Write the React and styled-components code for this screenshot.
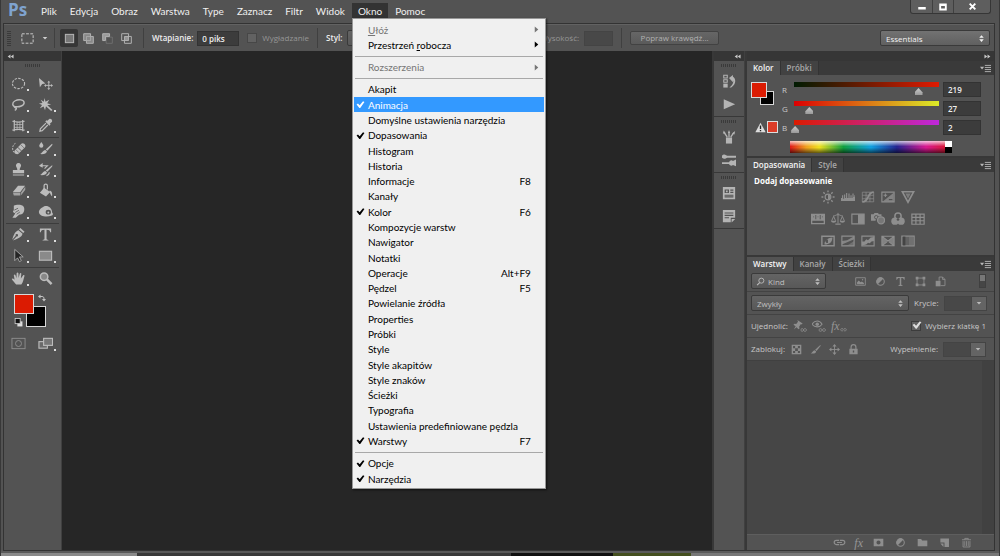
import React, { useState } from 'react';
import styled, { createGlobalStyle, ThemeProvider } from 'styled-components';

const theme = {
  colors: {
    panel: '#535353',
    panelDark: '#464646',
    bar: '#383838',
    canvas: '#262626',
    field: '#3c3c3c',
    text: '#eee',
    textMuted: '#c8c8c8',
    textDisabled: '#969696',
    highlight: '#3399ff',
  },
};

const GlobalStyle = createGlobalStyle`
  * {
    box-sizing: border-box;
  }

  html, body, #root {
    height: 100%;
  }

  body {
    margin: 0;
    overflow: hidden;
    background: #535353;
    font-family: 'Open Sans', 'Noto Sans', sans-serif;
    font-size: 8px;
    color: #e4e4e4;
  }

  button, input, select {
    margin: 0;
    padding: 0;
    font-family: inherit;
    font-size: inherit;
    color: inherit;
  }
`;

/* ---------- icons, all on a 16 x 16 grid ---------- */

const stroke = { fill: 'none', stroke: 'currentColor' };

const ICONS = {
  marquee: <rect x="2" y="3" width="12" height="10" {...stroke} strokeDasharray="3 1.5" />,
  ellipse: <ellipse cx="8" cy="8" rx="6.5" ry="5.5" {...stroke} strokeWidth="1.2" strokeDasharray="2.6 1.3" />,
  move: (
    <>
      <path d="M1 2l7 6-3.5.5L2 12z" />
      <path d="M11.500 6.500v7M8 10h7" {...stroke} />
      <path d="M11.500 5l1.600 2h-3.200zM11.500 15l1.600-2h-3.200zM6.500 10l2-1.600v3.200zM16 10l-2-1.600v3.200z" />
    </>
  ),
  lasso: <path d="M5 10.500C1 10 .8 6 4.500 4s9.500-1 9.500 2-5 5.200-9.500 4.200c-2-1-1 1.300.5 1.500s.500 2-1 2.600" {...stroke} strokeWidth="1.500" />,
  wand: <path d="M7 1l1 4 4-2-2.200 3.600L14 8l-4 .8 5.500 5L14 15 8.500 9.800 7.500 14 6 10l-4 2 2.300-3.500L1 7l3.800-.6L3 3l3.200 2z" />,
  grid: (
    <>
      <path d="M3.500 2v12M12.500 2v12M1.500 3.500c4 1 9 1 13 0M1.500 13c4-1 9-1 13 0" {...stroke} strokeWidth="1.300" />
      <path d="M6.500 4v9M9.500 4v9M3.500 7h9M3.500 10h9" {...stroke} strokeWidth=".8" />
    </>
  ),
  dropper: (
    <>
      <path d="M10 3l2-2c1.500-.8 3.600.8 3 3l-2.400 2.200.8.8-1.200 1.200L7.800 3.800 9 2.500z" />
      <path d="M8.500 5.500l-6 6L2 14l2.500-.5 6-6" {...stroke} strokeWidth="1.300" />
    </>
  ),
  bandage: (
    <>
      <path d="M6 13C1 14 0 4 5 2.500" {...stroke} strokeDasharray="2 1" />
      <path d="M4 10l7-7c2-2 6 1.500 3.700 4L8 13.700C5.500 15 2.500 12 4 10z" />
      <path d="M7 6.500l4 4" stroke="#535353" fill="none" />
      <path d="M10 3.500l4 4M5 9l3.500 3.500" stroke="#777" fill="none" />
    </>
  ),
  brush: (
    <>
      <path d="M15 1.500c.8.6.3 1.500-.3 2.300L9.500 10 7.500 8.500z" />
      <path d="M7 9.200l1.900 1.600c0 2.800-4.500 3.700-7.900 2.900 2.500-.7 2.800-4.300 6-4.500z" />
    </>
  ),
  dropBrush: (
    <>
      <path d="M3.500 1c1.500 2 2.200 2.800 2.200 4a2.200 2.200 0 01-4.400 0c0-1.200 1-2 2.200-4z" />
      <path d="M15 3c.8.6.3 1.300-.3 2L10 10.500 8.300 9zM7.800 9.500l1.700 1.500c0 2.500-4 3.500-7.500 2.900 2.400-.6 3-4.200 5.800-4.400z" />
    </>
  ),
  stamp: <path d="M8 1a2.700 2.700 0 012.400 4C9.500 6.500 9.300 7 9.300 8.500H14V12H2V8.500h4.700c0-1.500-.2-2-1.100-3.500A2.700 2.700 0 018 1zM2 13.200h12v1.300H2z" />,
  historyBrush: (
    <>
      <path d="M15 3.500c.6.5.3 1-.3 1.700L10 10.500 8.300 9zM7.800 9.500l1.700 1.500c0 2.500-4 3.500-7.500 2.900 2.400-.6 3-4.200 5.800-4.400z" />
      <path d="M3 4h7l-3 3M12 11c0 2-1 3-3 3.500" {...stroke} strokeWidth="1.200" />
      <path d="M1 4l4-3v5z" />
    </>
  ),
  eraser: (
    <>
      <path d="M7.500 3H15l-5 6.500H2z" />
      <path d="M2 10.200h8v3H3zM10.800 10L15.200 4v3.300l-4.400 5.700z" opacity=".75" />
    </>
  ),
  bucket: (
    <>
      <path d="M6.500 5L13 9.500 8.500 14.500 2 10.500z" />
      <path d="M6.500 10V3c0-2.500 3.500-2.500 3.500 0v4" {...stroke} strokeWidth="1.300" />
      <path d="M12.500 8c2.500.5 3 3 2.500 6-1.500-.5-1.500-3-3-4.500z" />
    </>
  ),
  smudge: (
    <>
      <path d="M3 1.800c3-1.500 9-1.300 10.500 1 1.500 2.500.5 7-2.500 8.200-1.500.5-2 .2-3 1l-3 2.700H1.500l3-4.700L2 8.500 3 6z" />
      <path d="M3.500 6.500l4-2M4.500 9l4-2.300M6 11l3.500-2.500" stroke="#666" fill="none" />
    </>
  ),
  sponge: (
    <>
      <path fillRule="evenodd" d="M5 3.500C9-.2 15.500 4 15 9c1.500 1 1 3.500-1 3.500C9 14.500.5 13 1 8c.3-2 2-3.500 4-4.500zM11 6.200a2.800 2.500 0 100 5 2.800 2.500 0 000-5z" />
      <circle cx="11" cy="9" r="1" />
    </>
  ),
  pen: (
    <path fillRule="evenodd" d="M10 1l4.500 4-1.500 1.500L8.500 2.500zM8 3.500L12.300 7.300c-1 3.500-4 5-10.300 7.200l4-4.500a1.300 1.300 0 10-1-.8L1.300 13.500C3 8 4.500 4.500 8 3.500z" />
  ),
  type: <path d="M2 1.500h12v4h-1c-.4-1.800-1-2.500-3.900-2.500v9.500c0 .8.500 1.100 2 1.300v.7H4.900v-.7c1.500-.2 2-.5 2-1.300V3C4 3 3.400 3.700 3 5.500H2z" />,
  arrow: <path d="M4 1.500v12l3-3 2 4 2-1-2-4h4z" fill="#252525" stroke="currentColor" strokeWidth=".8" />,
  rect: <rect x="1.500" y="3.500" width="13" height="9.500" fill="#8a8a8a" stroke="currentColor" strokeWidth="1.200" />,
  hand: (
    <path d="M5.500 14.500C4 12.500 2 10.500 .8 8.500c.4-1 1.700-.7 3 .8L3 4.500c.2-1.200 1.500-1.200 1.800 0l1 3.200L6 2.500c.3-1.200 1.600-1.200 1.900 0l.2 5 1.200-4.700c.4-1.200 1.700-.9 1.700.2L10.500 8l2.300-3.300c.9-.9 1.900-.2 1.500.9-1 3-1.300 6.500-3.300 8.900z" />
  ),
  zoom: (
    <>
      <circle cx="6.500" cy="6" r="4" fill="#888" stroke="currentColor" strokeWidth="1.600" />
      <path d="M9.500 9l5 5" {...stroke} strokeWidth="2.600" />
    </>
  ),
  quickMask: (
    <>
      <rect x="1" y="2.500" width="14" height="11" {...stroke} />
      <circle cx="8" cy="8" r="3.200" {...stroke} />
    </>
  ),
  screens: (
    <>
      <rect x="1" y="6" width="9" height="7" fill="#6a6a6a" stroke="currentColor" strokeWidth="1.200" />
      <rect x="6" y="2.500" width="9.500" height="7.500" fill="#777" stroke="currentColor" strokeWidth="1.200" />
    </>
  ),
  swap: (
    <>
      <path d="M4 5h4c3 0 4 1.500 4 5" {...stroke} strokeWidth="2" />
      <path d="M0 5l5-4v8zM12 15l4-5H8z" />
    </>
  ),
  defaults: (
    <>
      <rect x="6" y="6" width="9" height="9" fill="#ddd" />
      <rect x="2" y="1" width="9" height="9" fill="#111" stroke="#ccc" strokeWidth="1.500" />
    </>
  ),
  solid: <rect x="2" y="2" width="12" height="12" fill="#777" stroke="currentColor" strokeWidth="1.500" />,
  union: (
    <>
      <path d="M1 1h10v4h4v10H5v-4H1z" fill="#888" stroke="currentColor" strokeWidth="1.400" />
      <path d="M5 11V5h6M5 11h6V5" {...stroke} />
    </>
  ),
  subtract: (
    <>
      <path d="M1 1h10v4H5v6H1z" fill="#999" stroke="currentColor" strokeWidth="1.400" />
      <path d="M6 6h9v9H6z" {...stroke} opacity=".4" />
    </>
  ),
  intersect: (
    <>
      <path d="M1 1h10v10H1zM5 5h10v10H5z" {...stroke} strokeWidth="1.400" />
      <path d="M5 5h6v6H5z" opacity=".7" />
    </>
  ),
  history: (
    <>
      <path d="M2 1.500h4v3H2zM2 6.500h4v3H2z" {...stroke} strokeWidth="1.200" />
      <path d="M1.500 11h5v4.500h-5z" />
      <path d="M8 4.500l4.500-3.500v2.200c4 2.500 3.500 9-2 12.300h-2c4-3 5-6.500 4-8.500v2.500z" />
    </>
  ),
  play: <path d="M2 2.500l13 5.700L2 14z" />,
  brushes: (
    <>
      <path d="M4.500 8.500h7v7h-7z" />
      <path d="M6 8L2.500 3M8 8V2M10 8l3.500-5" {...stroke} strokeWidth="1.500" />
      <path d="M1 4l1-3.500L4.500 4zM6.800 3.500L8 0l1.300 3.500zM11.500 4L15 1l-.8 4z" />
    </>
  ),
  brushSettings: (
    <path d="M0 3c3-3 5 .2 6 .2h10v2.200H6C5 5.400 3 8 0 5.500zM0 10.500h8c1-2.200 3-3 4.500-1.500L16 7.500v7.500l-3.500-1.200C11 15 9 14.500 8 12.700H0z" />
  ),
  table: (
    <>
      <path fillRule="evenodd" d="M1 1h14v14H1zM3 4v4h5V4zM9.500 4v1.500H13V4zM9.500 6.700V8H13V6.700zM3 10v3h10v-3z" />
      <path d="M3 11h10v.8H3zM4.500 5h2v2h-2z" />
    </>
  ),
  note: <path fillRule="evenodd" d="M1 1h14v9h-5v5H1zM3 4v1.200h10V4zM3 6.700v1.200h10V6.700zM3 9.500v1.200h5V9.500zM11 11.500h4L11 15.500z" />,
  sun: (
    <>
      <circle cx="8" cy="8" r="3.300" {...stroke} strokeWidth="1.300" />
      <path d="M8 5a3 3 0 010 6z" />
      <path d="M8 .5v2.200M8 13.300v2.200M.5 8h2.200M13.300 8h2.200M2.700 2.700l1.600 1.600M11.700 11.700l1.600 1.600M13.300 2.700l-1.600 1.600M4.300 11.700l-1.600 1.600" {...stroke} strokeWidth="1.600" />
    </>
  ),
  levels: <path d="M0 12.500V9h1.200V6h1.300v4h1V5h1.300v4h1V3.500h1.300V9h1.400V4h1.300v5h1V6h1.300v3h1V4h1.300v4h.8V6H16v6.500z" />,
  curves: (
    <>
      <path d="M1.500 2.500h13v11h-13zM5.800 2.500v11M10.200 2.500v11M1.500 6h13M1.500 10h13" {...stroke} strokeWidth=".8" />
      <path d="M1.500 13.500C10 13.500 6 3 14.500 2.500" {...stroke} strokeWidth="2" />
    </>
  ),
  exposure: (
    <>
      <path d="M1 2.500h14v11H1z" {...stroke} strokeWidth="1.300" />
      <path d="M2 13L14.500 3v10.500z" opacity=".8" />
      <path d="M3 6h4M5 4v4" {...stroke} strokeWidth="1.200" />
      <path d="M9 11h4" stroke="#444" fill="none" />
    </>
  ),
  vibrance: (
    <>
      <path d="M1.500 2h13L8 14z" {...stroke} strokeWidth="1.800" />
      <path d="M5 4h6L8 10z" opacity=".7" />
    </>
  ),
  hue: (
    <path fillRule="evenodd" d="M0 2h16v12H0zM1.500 10v2.500h13V10zM5 3.300v5h1v-5zM10 3.300v5h1v-5zM2.500 5v1h1V5zM7.500 5v1h1V5zM12.500 5v1h1V5z" />
  ),
  balance: (
    <>
      <path d="M8 1v12M2.500 4.500C5 4.500 6 3 8 3s3 1.500 5.500 1.500M3 5l-2.200 5M3 5l2.200 5M13 5l-2.200 5M13 5l2.200 5" {...stroke} strokeWidth="1.100" />
      <path d="M0 10h6c0 3-6 3-6 0zM10 10h6c0 3-6 3-6 0zM5 13h6v1.500H5z" />
    </>
  ),
  blackWhite: (
    <>
      <path d="M1 2.500h14v11H1z" {...stroke} strokeWidth="1.300" />
      <path d="M8 2.500h7v11H8z" />
    </>
  ),
  photoFilter: (
    <>
      <path d="M0 2.500h3L4 1h4l1 1.500h3V5H8L5 10H0z" />
      <circle cx="6" cy="6" r="2" stroke="#535353" fill="none" />
      <circle cx="11.500" cy="9.500" r="4" fill="#777" stroke="currentColor" strokeWidth="1.500" />
    </>
  ),
  mixer: (
    <>
      <circle cx="8" cy="4.800" r="3.600" {...stroke} strokeWidth="1.700" />
      <circle cx="4.500" cy="10.500" r="4.200" />
      <circle cx="11.500" cy="10.500" r="4.200" />
      <circle cx="8" cy="8.500" r="1.500" fill="#535353" />
    </>
  ),
  lookup: <path d="M1 2.500h14v11.500H1zM1 6.200h14M1 10h14M5.600 2.500V14M10.400 2.500V14" {...stroke} strokeWidth="1.400" />,
  invert: (
    <>
      <path d="M1 2.500h14v11H1z" {...stroke} strokeWidth="1.600" />
      <path fillRule="evenodd" d="M4 12c0-5 3-7 9-8 0 5-3 8-9 8zM8 6.500a2 2 0 100 3.500z" />
    </>
  ),
  posterize: (
    <>
      <path d="M1 2.500h14v11H1z" {...stroke} strokeWidth="1.300" />
      <path d="M1 8l6-1 8-4.500V6L9 8.500 1 12z" opacity=".85" />
      <path d="M1 13.500l7-1L15 8v5.500z" opacity=".5" />
    </>
  ),
  threshold: (
    <>
      <path d="M1 2.500h14v11H1z" {...stroke} strokeWidth="1.300" />
      <path d="M1 13V8.500h3L6 6l2 1 3-3 4-.5V8l-3 .5-2 2-2-.5-2 2z" />
    </>
  ),
  selective: (
    <>
      <path d="M1 2.500h14v11H1zM1 2.500l14 11M15 2.500l-14 11" {...stroke} strokeWidth="1.200" />
      <path d="M1 2.500L8 8l-7 5.500zM15 2.500L8 8l7 5.500z" opacity=".8" />
    </>
  ),
  gradientMap: (
    <>
      <path d="M1 2.500h14v11H1z" {...stroke} strokeWidth="1.400" />
      <path d="M2 3h3v10H2z" fill="#444" />
      <path d="M5 3h4v10H5z" opacity=".25" />
      <path d="M9 3h5v10H9z" opacity=".5" />
    </>
  ),
  image: (
    <>
      <path d="M1 2.500h14v11H1z" {...stroke} strokeWidth="1.300" />
      <path d="M3 12V9l2.500-2.500L8 9l2-1 3 2v2z" />
      <circle cx="11" cy="5.500" r="1" />
    </>
  ),
  adjust: (
    <>
      <circle cx="8" cy="8" r="5.500" {...stroke} strokeWidth="1.500" />
      <path d="M12 4L4 12a5.600 5.600 0 010-8 5.600 5.600 0 018 0z" />
    </>
  ),
  shape: (
    <>
      <path d="M3 3h10v10H3z" {...stroke} strokeWidth="1.200" />
      <path d="M1 1h4v4H1zM11 1h4v4h-4zM1 11h4v4H1zM11 11h4v4h-4z" />
    </>
  ),
  smart: (
    <>
      <path d="M6 1.500h5l3.500 3.500v9H8" {...stroke} strokeWidth="1.300" />
      <path d="M1 7h7v8H1z" />
      <path d="M6 1.500V7M11 1.500V5h3.500" {...stroke} strokeWidth="1.300" />
    </>
  ),
  pin: (
    <>
      <path d="M5 1l6 4-1 1.200-1-.4-2 3 .5 2-1.200.8L4 9.500 1 12l2-3.700L.5 6.500 1.700 5.500l2 .2 2-2.700z" />
      <path d="M9 12.500a1.500 1.500 0 110 .1M12 12.500a1.700 1.500 0 110 .1" {...stroke} />
    </>
  ),
  eye: (
    <>
      <path d="M0 6c3-5 9-5 11.500 0C9 10 3 10 0 6z" {...stroke} strokeWidth="1.200" />
      <circle cx="6" cy="6" r="2" />
      <path d="M8 12.500a1.700 1.500 0 110 .1M12 12.500a1.700 1.500 0 110 .1" {...stroke} />
    </>
  ),
  link: (
    <path d="M7.500 5.500H4a2.500 2.500 0 000 5h3.500M8.500 5.500H12a2.500 2.500 0 010 5H8.500M5 8h6" {...stroke} strokeWidth="1.500" />
  ),
  smallLink: <path d="M7 6H4a2 2 0 000 5h3M9 6h3a2 2 0 010 5H9M6 8.500h4" {...stroke} strokeWidth="1.500" />,
  checker: <path fillRule="evenodd" d="M1 1h14v14H1zM3 3v3h3V3zM10 3v3h3V3zM6 6v4h4V6zM3 10v3h3v-3zM10 10v3h3v-3z" />,
  cross: (
    <>
      <path d="M8 2v12M2 8h12" {...stroke} strokeWidth="1.300" />
      <path d="M8 0l3 3.500H5zM8 16l3-3.500H5zM0 8l3.500-3v6zM16 8l-3.500-3v6z" />
    </>
  ),
  lock: (
    <>
      <path fillRule="evenodd" d="M2 7h12v8H2zM7 9.500v3h2v-3z" />
      <path d="M4.500 7.500V4.500a3.500 3.500 0 017 0v3" {...stroke} strokeWidth="1.700" />
    </>
  ),
  mask: <path fillRule="evenodd" d="M1 2.500h14v11H1zM8 5a3 3 0 100 6 3 3 0 000-6z" />,
  folder: <path d="M1 3h5l1.500 2H15v8.500H1z" />,
  newLayer: <path d="M2 2h12.500v12.500H8V8H2zM2 9.500h4.500v5z" />,
  trash: (
    <>
      <path d="M1.500 4h13M5.500 4V2h5v2M3 6v8.500h10V6" {...stroke} strokeWidth="1.300" />
      <path d="M5.500 6v7M8 6v7M10.500 6v7" {...stroke} strokeWidth="1.200" />
    </>
  ),
  search: (
    <>
      <circle cx="9.500" cy="6.500" r="4.500" {...stroke} strokeWidth="1.500" />
      <path d="M6.500 10L2 14.500" {...stroke} strokeWidth="1.800" />
    </>
  ),
  warning: (
    <>
      <path d="M8 1l7.500 14H.5z" fill="#ddd" />
      <path d="M8 5v5M8 11.500v2" fill="none" stroke="#222" strokeWidth="2" />
    </>
  ),
  check: <path d="M1 8l2.500-2 3 3.200L12.500 2 15 3.500 7.500 14H6z" />,
  right: <path d="M4 1l8 7-8 7z" />,
  down: <path d="M2 5h12l-6 7z" />,
  upDown: <path d="M4 6.500L8 2l4 4.500zM4 9.500h8L8 14z" />,
  collapse: <path d="M8 3.500v9L1.500 8zM15 3.500v9L8.500 8z" />,
  expand: <path d="M1 3.500v9L7.500 8zM8 3.500v9L14.500 8z" />,
  minimize: <path d="M2 8h12v4H2z" />,
  maximize: <path fillRule="evenodd" d="M2 2.500h12v11H2zM5 6.500v4h6v-4z" />,
  close: <path d="M3 3l10 10M13 3L3 13" {...stroke} strokeWidth="3.400" />,
  panelMenu: (
    <>
      <path d="M0 5.500h6L3 9.500z" />
      <path d="M7 3.500h9M7 6.500h9M7 9.500h9M7 12.500h9" {...stroke} strokeWidth="1.300" />
    </>
  ),
};

const Svg = styled.svg`
  display: block;
  flex: none;
  width: ${props => props.$size}px;
  height: ${props => props.$size}px;
  fill: currentColor;
`;

const Icon = ({ name, size = 14 }) => (
  <Svg viewBox="0 0 16 16" $size={size} aria-hidden="true">
    {ICONS[name]}
  </Svg>
);

/* ---------- window frame ---------- */

const Window = styled.div`
  display: flex;
  flex-direction: column;
  height: 100vh;
  border: solid #383838;
  border-width: 0 1px;
  background-color: ${props => props.theme.colors.panel};
`;

const TitleBar = styled.header`
  display: flex;
  flex: none;
  align-items: flex-start;
  height: 23px;
  padding: 0 8px 0 7px;
`;

const Logo = styled.span`
  width: 27px;
  font-size: 17px;
  font-weight: 700;
  line-height: 20px;
  color: #7fa3cf;
`;

const MenuBar = styled.nav`
  display: flex;
  gap: 1px;
  padding-top: 3px;
  font-family: Lato, 'Open Sans', sans-serif;
`;

const MenuHolder = styled.div`
  position: relative;
`;

const MenuButton = styled.button`
  height: 16px;
  padding: 0 6px;
  border: none;
  font-size: 10px;
  line-height: 16px;
  color: #f0f0f0;
  background-color: ${props => (props.$open ? '#333' : 'transparent')};
`;

const WindowControls = styled.div`
  display: flex;
  margin-left: auto;
  border: 1px solid #363636;
  border-top: none;
  border-radius: 0 0 3px 3px;
  background-color: #5e5e5e;
  color: #fff;
`;

const ControlButton = styled.button`
  display: flex;
  align-items: center;
  justify-content: center;
  width: ${props => (props.$wide ? 37 : 21)}px;
  height: 13px;
  border: none;
  border-left: ${props => (props.$first ? 'none' : '1px solid #404040')};
  background: none;
`;

const Frame = styled.div`
  display: flex;
  flex: 1;
  flex-direction: column;
  min-height: 0;
  margin: 0 4px 0 2px;
  border: 1px solid #333;
`;

const Workspace = styled.main`
  display: flex;
  flex: 1;
  min-height: 0;
  background-color: ${props => props.theme.colors.bar};
`;

const Canvas = styled.div`
  flex: 1;
  margin-right: 2px;
  background-color: ${props => props.theme.colors.canvas};
`;

const BottomEdge = styled.div`
  flex: none;
  height: 5px;
  border-top: 2px solid #5a5a5a;
  background: linear-gradient(90deg, #8a8a8a 0 136px, #3a3a3a 136px 510px, #101010 510px 612px, #45501f 612px 690px, #777 690px);
`;

/* ---------- drop-down menu ---------- */

const Dropdown = styled.ul`
  position: absolute;
  z-index: 10;
  top: 15px;
  left: 0;
  display: flex;
  flex-direction: column;
  width: 194px;
  height: 471px;
  margin: 0;
  padding: 3px 1px 2px;
  list-style: none;
  border: 1px solid #979797;
  background-color: #f0f0f0;
  box-shadow: 1px 1px 2px rgba(0, 0, 0, 0.6);
  font-size: 10px;
`;

const DropdownRow = styled.li`
  display: flex;
  flex: 1;
  min-height: 0;
`;

const DropdownItem = styled.button`
  display: grid;
  grid-template-columns: 14px 1fr auto 13px;
  align-items: center;
  width: 100%;
  border: none;
  text-align: left;
  line-height: 14px;
  white-space: nowrap;
  color: ${props => (props.$active ? '#fff' : '#000')};
  background-color: ${props => (props.$active ? props.theme.colors.highlight : 'transparent')};

  &:disabled {
    color: #757575;
  }
`;

const MenuMark = styled.span`
  display: flex;
  justify-content: ${props => (props.$end ? 'flex-end' : 'center')};
  padding-right: ${props => (props.$end ? 4 : 0)}px;
`;

const DropdownLine = styled.li`
  flex: none;
  height: 1px;
  margin: 3px 1px;
  background-color: #a8a8a8;
`;

/* ---------- options bar ---------- */

const OptionsBar = styled.div`
  display: flex;
  flex: none;
  align-items: center;
  height: 27px;
  padding: 0 4px 0 3px;
  border-top: 1px solid #626262;
`;

const Grip = styled.span`
  flex: none;
  width: ${props => (props.$upright ? 4 : 16)}px;
  height: ${props => (props.$upright ? 16 : 3)}px;
  background: repeating-linear-gradient(${props => (props.$upright ? '0deg' : '90deg')}, #3a3a3a 0 1px, #535353 1px 2px);
`;

const Divider = styled.span`
  flex: none;
  width: 1px;
  height: 20px;
  margin: 0 ${props => props.$gap || 8}px;
  background-color: #404040;
`;

const ToolPreset = styled.button`
  display: flex;
  align-items: center;
  gap: 7px;
  width: 29px;
  margin-left: 9px;
  border: none;
  background: none;
  color: #d0d0d0;
`;

const ModeGroup = styled.div`
  display: flex;
  gap: 1px;
`;

const ModeButton = styled.button`
  display: flex;
  align-items: center;
  justify-content: center;
  width: 18px;
  height: 18px;
  border: none;
  border-radius: 2px;
  color: #b4b4b4;
  background-color: ${props => (props.$active ? '#363636' : 'transparent')};
`;

const Label = styled.label`
  flex: none;
  white-space: nowrap;
  line-height: 14px;
  font-weight: ${props => (props.$strong ? 600 : 500)};
  color: ${({ theme: { colors }, $dim, $strong }) =>
    $dim ? colors.textDisabled : $strong ? colors.text : colors.textMuted};
`;

const Field = styled.input`
  width: ${props => props.$width}px;
  height: 15px;
  padding: 0 4px;
  border: 1px solid ${props => (props.disabled ? '#444' : '#333')};
  background-color: ${props => (props.disabled ? '#484848' : props.theme.colors.field)};
  color: #f0f0f0;
  font-weight: 600;
`;

const TickBox = styled.input`
  appearance: none;
  display: block;
  flex: none;
  width: 10px;
  height: 10px;
  border: 1px solid ${props => (props.$on ? '#3c3c3c' : '#474747')};
  background-color: #626262;
`;

/* the tick is drawn over the box and leans out of it */
const TickHolder = styled.span`
  position: relative;
  color: #ddd;

  svg {
    position: absolute;
    top: -1px;
    left: 1px;
    pointer-events: none;
  }
`;

const SelectBox = styled.span`
  display: grid;
  flex: none;
  grid-template-columns: ${props => (props.$icon ? '16px' : '5px')} 1fr 12px;
  align-items: center;
  width: ${props => props.$width}px;
  height: 16px;
  border: 1px solid #3a3a3a;
  border-radius: 2px;
  background: ${props => (props.$bright ? 'linear-gradient(#727272, #606060)' : 'linear-gradient(#646464, #585858)')};
  color: ${props => (props.$bright ? '#f2f2f2' : '#c0c0c0')};

  svg {
    grid-row: 1;
    pointer-events: none;
  }

  svg:last-child {
    grid-column: 3;
  }

  svg:first-child {
    grid-column: 1;
    margin-left: 4px;
  }
`;

const Select = styled.select`
  grid-row: 1;
  grid-column: 1 / -1;
  width: 100%;
  height: 14px;
  padding-left: ${props => props.$indent}px;
  appearance: none;
  border: none;
  background: none;
  font-weight: 500;
`;

const OptionButton = styled.button`
  flex: none;
  width: 89px;
  height: 14px;
  border: 1px solid #424242;
  border-radius: 2px;
  background: linear-gradient(#666, #5a5a5a);
  color: #b0b0b0;
  line-height: 12px;
`;

const Row = styled.div`
  display: flex;
  align-items: center;
  gap: ${props => props.$gap || 0}px;
  margin-left: ${props => (props.$push ? 'auto' : `${props.$before || 0}px`)};
`;

/* ---------- tools and icon docks ---------- */

const Dock = styled.aside`
  display: flex;
  flex: none;
  flex-direction: column;
  width: ${props => props.$width}px;
  margin-right: ${props => props.$gap || 0}px;
  background-color: ${props => props.theme.colors.panel};
  border-right: 1px solid #404040;
`;

const DockHeader = styled.div`
  display: flex;
  flex: none;
  align-items: center;
  justify-content: ${props => (props.$right ? 'flex-end' : 'flex-start')};
  height: 10px;
  padding: 0 3px;
  background-color: #363636;
  color: #c8c8c8;
`;

const GripRow = styled.div`
  display: flex;
  justify-content: center;
  padding: 3px 0 ${props => (props.$tight ? 2 : 6)}px;
`;

const ToolGroup = styled.div`
  display: grid;
  grid-template-columns: 27px 27px;
  grid-auto-rows: 21px;
  margin: 0 2px;
  padding-bottom: 1px;
  border-bottom: ${props => (props.$last ? 'none' : '1px solid #3c3c3c')};
`;

const ToolButton = styled.button`
  display: flex;
  align-items: center;
  justify-content: center;
  padding-right: 2px;
  border: none;
  color: ${props => (props.$dim ? '#8e8e8e' : '#bcbcbc')};
  background: ${props => (props.$more ? 'linear-gradient(#ddd, #ddd) 21px 16px / 2px 2px no-repeat' : 'none')};
`;

const SwatchArea = styled.div`
  display: grid;
  grid-template-columns: 12px 8px 12px;
  grid-template-rows: 12px 8px 13px;
  margin: 4px 0 6px 10px;
`;

const Swatch = styled.button`
  grid-area: ${props => (props.$back ? '2 / 2 / 4 / 4' : '1 / 1 / 3 / 3')};
  z-index: ${props => (props.$back ? 0 : 1)};
  border: 1px solid #d8d8d8;
  background-color: ${props => props.$color};
`;

const SwatchAction = styled.button`
  display: flex;
  grid-area: ${props => props.$area};
  align-self: ${props => props.$align};
  justify-self: ${props => props.$justify};
  border: none;
  background: none;
  color: #c4c4c4;
`;

const IconGroup = styled.div`
  display: flex;
  flex-direction: column;
  align-items: center;
  height: 56px;
  border-bottom: 1px solid #383838;
`;

const IconButton = styled.button`
  display: flex;
  align-items: center;
  justify-content: center;
  width: ${props => props.$width || 14}px;
  height: ${props => props.$height || 14}px;
  border: none;
  background: none;
  color: ${props => props.$color || '#8e8e8e'};
`;

/* ---------- panels ---------- */

const PanelColumn = styled.aside`
  display: flex;
  flex: none;
  flex-direction: column;
  width: 247px;
`;

const Panel = styled.section`
  display: flex;
  flex: ${props => (props.$grow ? 1 : 'none')};
  flex-direction: column;
  min-height: 0;
  margin-bottom: ${props => (props.$grow ? 0 : 2)}px;
  background-color: ${props => props.theme.colors.panel};
`;

const TabBar = styled.div`
  display: flex;
  flex: none;
  height: 14px;
  padding-right: 3px;
  background-color: #3a3a3a;
`;

const Tab = styled.button`
  padding: 0 6px;
  border: none;
  border-right: 1px solid #333;
  font-weight: 600;
  line-height: 14px;
  color: ${props => (props.$active ? '#f4f4f4' : '#a8a8a8')};
  background-color: ${props => (props.$active ? props.theme.colors.panel : '#424242')};
`;

const PanelMenu = styled.button`
  margin-left: auto;
  border: none;
  background: none;
  color: #b8b8b8;
`;

const ColorBody = styled.div`
  display: grid;
  grid-template-columns: 27px 1fr;
  column-gap: 4px;
  align-content: start;
  height: 81px;
  padding: 5px 13px 0 4px;
`;

const ColorLeft = styled.div`
  display: flex;
  flex-direction: column;
  gap: 16px;
`;

const MiniSwatches = styled.div`
  display: grid;
  grid-template-columns: 9px 7px 7px;
  grid-template-rows: 9px 7px 7px;
  margin-top: 2px;
`;

const ColorRow = styled.div`
  display: grid;
  grid-template-columns: 8px 153px 38px;
  align-items: center;
  height: 19px;
`;

const Range = styled.input`
  appearance: none;
  display: block;
  width: 153px;
  height: 15px;
  background: none;

  &::-webkit-slider-runnable-track {
    height: 15px;
    background: linear-gradient(90deg, ${props => props.$from}, ${props => props.$to}) 4px 0 no-repeat;
    background-size: 145px 5px;
  }

  &::-webkit-slider-thumb {
    appearance: none;
    width: 8px;
    height: 7px;
    margin-top: 6px;
    background: linear-gradient(#ccc, #999);
    clip-path: polygon(50% 0, 100% 60%, 100% 100%, 0 100%, 0 60%);
  }
`;

const Gamut = styled.button`
  width: 11px;
  height: 12px;
  border: 1px solid #ddd;
  background-color: #dc3c28;
`;

const Spectrum = styled.div`
  display: flex;
  grid-column: 2;
  width: 162px;
  height: 12px;
  margin: 4px 0 0 8px;
  background:
    linear-gradient(rgba(255, 255, 255, 0.75), transparent 45%, transparent 55%, rgba(0, 0, 0, 0.6)),
    linear-gradient(90deg, #e01818, #f0a020 10%, #f0e020 18%, #10a040 33%, #10a0e0 50%, #242490 66%, #d81890 84%, #d81818);
`;

const SpectrumEnds = styled.span`
  width: 7px;
  margin-left: auto;
  background: linear-gradient(#fff 50%, #000 50%);
`;

const AdjustBody = styled.div`
  height: 83px;
  padding: 2px 12px 2px 7px;
`;

const AdjustTitle = styled.h2`
  margin: 0 0 2px;
  font-size: 8px;
  font-weight: 700;
  line-height: 14px;
  color: #fff;
`;

const AdjustRow = styled.div`
  display: flex;
  justify-content: center;
  gap: 6px;
  height: 22px;
`;

const LayerRow = styled.div`
  display: flex;
  flex: none;
  align-items: center;
  gap: 5px;
  height: ${props => (props.$first ? 20 : 23)}px;
  padding: 0 8px 0 4px;
  border-top: ${props => (props.$first ? 'none' : '1px solid #434343')};
`;

const FilterSwitch = styled.button`
  width: 7px;
  height: 14px;
  margin-left: 28px;
  border: 1px solid #404040;
  background: linear-gradient(#777 50%, #464646 50%);
`;

const PercentField = styled.span`
  display: flex;
  flex: none;
`;

const StepButton = styled.button`
  display: flex;
  align-items: center;
  justify-content: center;
  width: 15px;
  height: 15px;
  border: 1px solid #444;
  border-left: none;
  background-color: #646464;
  color: #bbb;
`;

const FxButton = styled.button`
  display: flex;
  align-items: flex-end;
  border: none;
  background: none;
  color: #969696;
  font-size: 12px;
  font-style: italic;
  font-family: 'Liberation Serif', serif;
  line-height: 14px;
`;

const LayerList = styled.div`
  flex: 1;
  border-top: 1px solid #404040;
  border-right: 12px solid #414141;
  background-color: ${props => props.theme.colors.panelDark};
`;

const LayerFooter = styled.div`
  display: flex;
  flex: none;
  align-items: center;
  justify-content: flex-end;
  gap: 8px;
  height: 16px;
  padding-right: 21px;
  border-top: 1px solid #5e5e5e;
`;

const MENUS = ['Plik', 'Edycja', 'Obraz', 'Warstwa', 'Type', 'Zaznacz', 'Filtr', 'Widok', 'Okno', 'Pomoc'];

const WINDOW_MENU = [
  { label: <><u>U</u>łóż</>, submenu: true, disabled: true },
  { label: <>Przestrzeń <u>r</u>obocza</>, submenu: true },
  null,
  { label: 'Rozszerzenia', submenu: true, disabled: true },
  null,
  { label: 'Akapit' },
  { label: 'Animacja', checked: true, active: true },
  { label: 'Domyślne ustawienia narzędzia' },
  { label: 'Dopasowania', checked: true },
  { label: 'Histogram' },
  { label: 'Historia' },
  { label: 'Informacje', shortcut: 'F8' },
  { label: 'Kanały' },
  { label: 'Kolor', checked: true, shortcut: 'F6' },
  { label: 'Kompozycje warstw' },
  { label: 'Nawigator' },
  { label: 'Notatki' },
  { label: 'Operacje', shortcut: 'Alt+F9' },
  { label: 'Pędzel', shortcut: 'F5' },
  { label: 'Powielanie źródła' },
  { label: 'Properties' },
  { label: 'Próbki' },
  { label: 'Style' },
  { label: 'Style akapitów' },
  { label: 'Style znaków' },
  { label: 'Ścieżki' },
  { label: 'Typografia' },
  { label: 'Ustawienia predefiniowane pędzla' },
  { label: 'Warstwy', checked: true, shortcut: 'F7' },
  null,
  { label: 'Opcje', checked: true },
  { label: 'Narzędzia', checked: true },
];

// [icon, has more tools behind it]
const TOOL_GROUPS = [
  [['ellipse', true], ['move', false], ['lasso', true], ['wand', true], ['grid', true], ['dropper', true]],
  [['bandage', true], ['dropBrush', true], ['stamp', true], ['historyBrush', true], ['eraser', true], ['bucket', true], ['smudge', true], ['sponge', true]],
  [['pen', true], ['type', true], ['arrow', true], ['rect', true]],
  [['hand', true], ['zoom', false]],
];

const DOCK_GROUPS = [['history', 'play'], ['brushes', 'brushSettings'], ['table', 'note']];

const ADJUSTMENTS = [
  ['sun', 'levels', 'curves', 'exposure', 'vibrance'],
  ['hue', 'balance', 'blackWhite', 'photoFilter', 'mixer', 'lookup'],
  ['invert', 'posterize', 'threshold', 'selective', 'gradientMap'],
];

const WindowMenu = () => (
  <Dropdown>
    {WINDOW_MENU.map((item, i) =>
      item ? (
        <DropdownRow key={i}>
          <DropdownItem $active={item.active} disabled={item.disabled}>
            <MenuMark>{item.checked && <Icon name="check" size={9} />}</MenuMark>
            <span>{item.label}</span>
            <span>{item.shortcut}</span>
            <MenuMark $end>{item.submenu && <Icon name="right" size={7} />}</MenuMark>
          </DropdownItem>
        </DropdownRow>
      ) : (
        <DropdownLine key={i} />
      )
    )}
  </Dropdown>
);

const Dropbox = ({ id, value, width, bright, icon, label }) => (
  <SelectBox $width={width} $bright={bright} $icon={icon}>
    {icon && <Icon name={icon} size={9} />}
    <Select id={id} aria-label={label} $indent={icon ? 16 : 5} defaultValue={value}>
      <option>{value}</option>
    </Select>
    <Icon name="upDown" size={9} />
  </SelectBox>
);

const Percent = ({ id }) => (
  <PercentField>
    <Field id={id} $width={28} disabled />
    <StepButton aria-label="Zmień wartość">
      <Icon name="down" size={6} />
    </StepButton>
  </PercentField>
);

const Options = () => (
  <OptionsBar>
    <Grip $upright />
    <ToolPreset aria-label="Narzędzie">
      <Icon name="marquee" size={15} />
      <Icon name="down" size={6} />
    </ToolPreset>
    <Divider $gap={5} />
    <ModeGroup>
      {['solid', 'union', 'subtract', 'intersect'].map((name, i) => (
        <ModeButton key={name} $active={i === 0} aria-label={name}>
          <Icon name={name} size={11} />
        </ModeButton>
      ))}
    </ModeGroup>
    <Divider />
    <Row $gap={4}>
      <Label $strong htmlFor="feather">Wtapianie:</Label>
      <Field id="feather" $width={42} defaultValue="0 piks" />
    </Row>
    <Row $gap={5} $before={8}>
      <TickBox id="smooth" type="checkbox" disabled />
      <Label $dim htmlFor="smooth">Wygładzanie</Label>
    </Row>
    <Divider />
    <Row $gap={5}>
      <Label $strong htmlFor="style">Styl:</Label>
      <Dropbox id="style" value="Normalny" width={188} />
      <Label $dim htmlFor="height">Wysokość:</Label>
      <Field id="height" $width={29} disabled />
    </Row>
    <Divider />
    <OptionButton>Popraw krawędź...</OptionButton>
    <Row $push>
      <Dropbox label="Obszar roboczy" value="Essentials" width={110} bright />
    </Row>
  </OptionsBar>
);

const Tools = () => (
  <Dock $width={58}>
    <DockHeader>
      <Icon name="collapse" size={7} />
    </DockHeader>
    <GripRow>
      <Grip />
    </GripRow>
    {TOOL_GROUPS.map((tools, i) => (
      <ToolGroup key={i} $last={i === TOOL_GROUPS.length - 1}>
        {tools.map(([name, more]) => (
          <ToolButton key={name} $more={more} aria-label={name}>
            <Icon name={name} size={15} />
          </ToolButton>
        ))}
      </ToolGroup>
    ))}
    <SwatchArea>
      <Swatch $color="#db1b02" aria-label="Kolor narzędzia" />
      <Swatch $color="#000" $back aria-label="Kolor tła" />
      <SwatchAction $area="1 / 3" $align="start" $justify="end" aria-label="Zamień kolory">
        <Icon name="swap" size={8} />
      </SwatchAction>
      <SwatchAction $area="3 / 1" $align="end" $justify="start" aria-label="Kolory domyślne">
        <Icon name="defaults" size={9} />
      </SwatchAction>
    </SwatchArea>
    <ToolGroup $last>
      <ToolButton $dim aria-label="Szybka maska">
        <Icon name="quickMask" size={15} />
      </ToolButton>
      <ToolButton $more aria-label="Tryb ekranu">
        <Icon name="screens" size={15} />
      </ToolButton>
    </ToolGroup>
  </Dock>
);

const IconDock = () => (
  <Dock $width={31} $gap={2}>
    <DockHeader $right>
      <Icon name="collapse" size={7} />
    </DockHeader>
    {DOCK_GROUPS.map((icons, i) => (
      <IconGroup key={i}>
        <GripRow $tight>
          <Grip />
        </GripRow>
        {icons.map(name => (
          <IconButton key={name} $width={30} $height={23} $color="#b4b4b4" aria-label={name}>
            <Icon name={name} size={14} />
          </IconButton>
        ))}
      </IconGroup>
    ))}
  </Dock>
);

const Tabs = ({ names }) => (
  <TabBar>
    {names.map((name, i) => (
      <Tab key={name} $active={i === 0}>{name}</Tab>
    ))}
    <PanelMenu aria-label="Menu panelu">
      <Icon name="panelMenu" size={11} />
    </PanelMenu>
  </TabBar>
);

const ColorPanel = () => {
  const [rgb, setRgb] = useState({ R: 219, G: 27, B: 2 });
  const ends = {
    R: [`rgb(0, ${rgb.G}, ${rgb.B})`, `rgb(225, ${rgb.G}, ${rgb.B})`],
    G: [`rgb(${rgb.R}, 0, ${rgb.B})`, `rgb(${rgb.R}, 235, 40)`],
    B: [`rgb(${rgb.R}, ${rgb.G}, 0)`, `rgb(190, 40, 220)`],
  };

  return (
    <Panel>
      <Tabs names={['Kolor', 'Próbki']} />
      <ColorBody>
        <ColorLeft>
          <MiniSwatches>
            <Swatch $color={`rgb(${rgb.R}, ${rgb.G}, ${rgb.B})`} aria-label="Kolor narzędzia" />
            <Swatch $color="#000" $back aria-label="Kolor tła" />
          </MiniSwatches>
          <Row $gap={1} $push>
            <Icon name="warning" size={11} />
            <Gamut aria-label="Kolor spoza gamy" />
          </Row>
        </ColorLeft>
        <div>
          {Object.keys(rgb).map(channel => (
            <ColorRow key={channel}>
              <Label htmlFor={`channel-${channel}`}>{channel}</Label>
              <Range
                id={`channel-${channel}`}
                type="range"
                min="0"
                max="255"
                value={rgb[channel]}
                $from={ends[channel][0]}
                $to={ends[channel][1]}
                onChange={e => setRgb({ ...rgb, [channel]: Number(e.target.value) })}
              />
              <Field
                $width={38}
                aria-label={`Wartość ${channel}`}
                value={rgb[channel]}
                onChange={e => setRgb({ ...rgb, [channel]: Number(e.target.value) || 0 })}
              />
            </ColorRow>
          ))}
        </div>
        <Spectrum>
          <SpectrumEnds />
        </Spectrum>
      </ColorBody>
    </Panel>
  );
};

const AdjustmentsPanel = () => (
  <Panel>
    <Tabs names={['Dopasowania', 'Style']} />
    <AdjustBody>
      <AdjustTitle>Dodaj dopasowanie</AdjustTitle>
      {ADJUSTMENTS.map((row, i) => (
        <AdjustRow key={i}>
          {row.map(name => (
            <IconButton key={name} aria-label={name}>
              <Icon name={name} size={14} />
            </IconButton>
          ))}
        </AdjustRow>
      ))}
    </AdjustBody>
  </Panel>
);

const LayersPanel = () => {
  const [frameOne, setFrameOne] = useState(true);

  return (
    <Panel $grow>
      <Tabs names={['Warstwy', 'Kanały', 'Ścieżki']} />
      <LayerRow $first>
        <Dropbox label="Filtr warstw" value="Kind" width={75} icon="search" />
        <Row $push $gap={8}>
          {['image', 'adjust', 'type', 'shape', 'smart'].map(name => (
            <IconButton key={name} $width={12} aria-label={name}>
              <Icon name={name} size={11} />
            </IconButton>
          ))}
        </Row>
        <FilterSwitch aria-label="Włącz filtr" />
      </LayerRow>
      <LayerRow>
        <Dropbox label="Tryb mieszania" value="Zwykły" width={158} />
        <Row $push $gap={5}>
          <Label htmlFor="opacity">Krycie:</Label>
          <Percent id="opacity" />
        </Row>
      </LayerRow>
      <LayerRow>
        <Label as="span">Ujednolić:</Label>
        <IconButton aria-label="Położenie">
          <Icon name="pin" size={14} />
        </IconButton>
        <IconButton aria-label="Widoczność">
          <Icon name="eye" size={14} />
        </IconButton>
        <FxButton aria-label="Styl warstwy">
          fx
          <Icon name="smallLink" size={7} />
        </FxButton>
        <Row $push $gap={4}>
          <TickHolder>
            <TickBox
              id="frame"
              type="checkbox"
              $on
              checked={frameOne}
              onChange={e => setFrameOne(e.target.checked)}
            />
            {frameOne && <Icon name="check" size={10} />}
          </TickHolder>
          <Label htmlFor="frame">Wybierz klatkę 1</Label>
        </Row>
      </LayerRow>
      <LayerRow>
        <Label as="span">Zablokuj:</Label>
        {['checker', 'brush', 'cross', 'lock'].map(name => (
          <IconButton key={name} aria-label={name}>
            <Icon name={name} size={11} />
          </IconButton>
        ))}
        <Row $push $gap={5}>
          <Label htmlFor="fill">Wypełnienie:</Label>
          <Percent id="fill" />
        </Row>
      </LayerRow>
      <LayerList />
      <LayerFooter>
        <IconButton aria-label="Połącz warstwy">
          <Icon name="link" size={13} />
        </IconButton>
        <FxButton aria-label="Dodaj styl warstwy">fx</FxButton>
        {['mask', 'adjust', 'folder', 'newLayer', 'trash'].map(name => (
          <IconButton key={name} aria-label={name}>
            <Icon name={name} size={11} />
          </IconButton>
        ))}
      </LayerFooter>
    </Panel>
  );
};

const App = () => {
  const [openMenu, setOpenMenu] = useState('Okno');

  return (
    <ThemeProvider theme={theme}>
      <GlobalStyle />
      <Window>
        <TitleBar>
          <Logo>Ps</Logo>
          <MenuBar>
            {MENUS.map(name => (
              <MenuHolder key={name}>
                <MenuButton
                  $open={name === openMenu}
                  onClick={() => setOpenMenu(name === openMenu ? null : name)}
                >
                  {name}
                </MenuButton>
                {name === 'Okno' && openMenu === name && <WindowMenu />}
              </MenuHolder>
            ))}
          </MenuBar>
          <WindowControls>
            <ControlButton $first aria-label="Minimalizuj">
              <Icon name="minimize" size={10} />
            </ControlButton>
            <ControlButton aria-label="Maksymalizuj">
              <Icon name="maximize" size={10} />
            </ControlButton>
            <ControlButton $wide aria-label="Zamknij">
              <Icon name="close" size={9} />
            </ControlButton>
          </WindowControls>
        </TitleBar>
        <Frame>
          <Options />
          <Workspace>
            <Tools />
            <Canvas />
            <IconDock />
            <PanelColumn>
              <DockHeader $right>
                <Icon name="expand" size={7} />
              </DockHeader>
              <ColorPanel />
              <AdjustmentsPanel />
              <LayersPanel />
            </PanelColumn>
          </Workspace>
        </Frame>
        <BottomEdge />
      </Window>
    </ThemeProvider>
  );
};

export default App;
